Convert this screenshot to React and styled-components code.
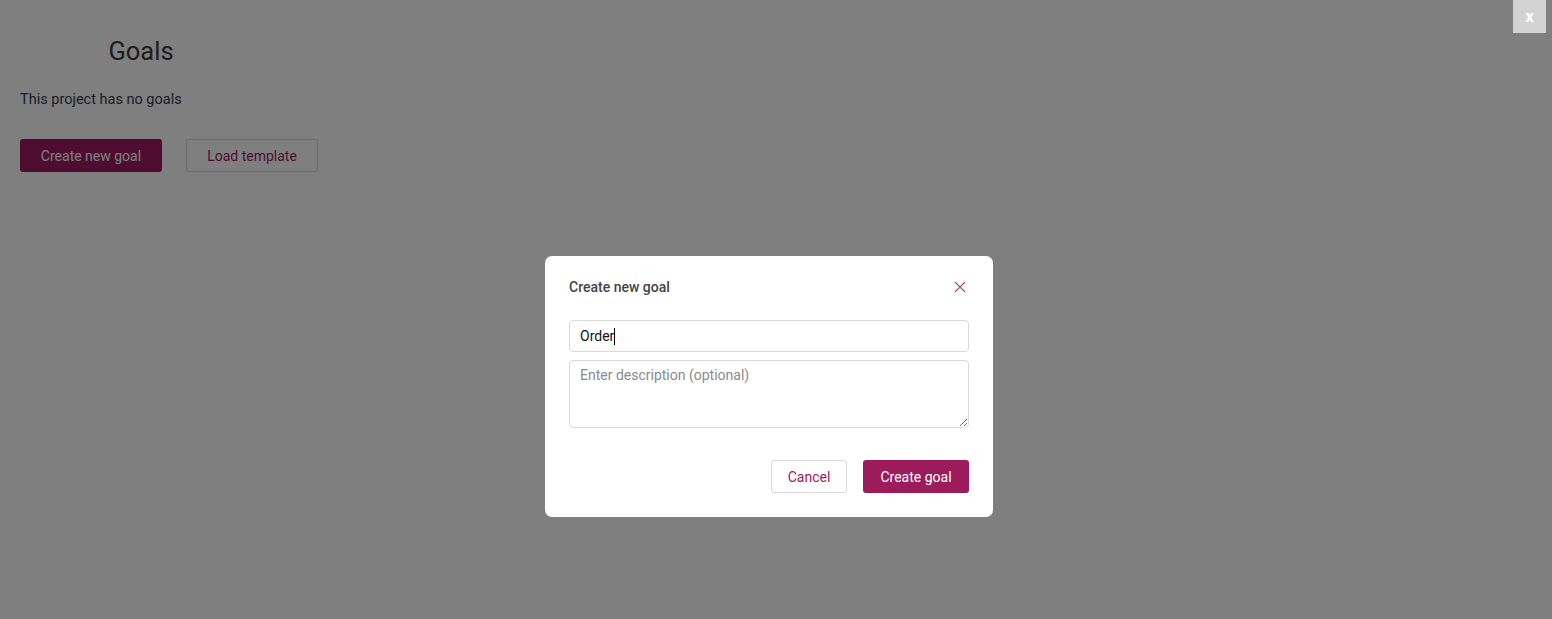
import React, { useState } from 'react'
import styled, { createGlobalStyle } from 'styled-components'

const GlobalStyle = createGlobalStyle`
  html, body {
    margin: 0;
    padding: 0;
    background: #fff;
    font-family: Roboto, "Liberation Sans", sans-serif;
  }
  * { box-sizing: border-box; }
`

const App = () => {
    const [title, setTitle] = useState('Order')
    const [desc, setDesc] = useState('')

    return (
        <>
            <GlobalStyle />
            <Page>
                <Header>
                    <Title>Goals</Title>
                </Header>
                <Empty>This project has no goals</Empty>
                <Actions>
                    <PrimaryButton>Create new goal</PrimaryButton>
                    <OutlineButton>Load template</OutlineButton>
                </Actions>
            </Page>

            <Overlay>
                <Modal>
                    <ModalHead>
                        <ModalTitle>Create new goal</ModalTitle>
                        <CloseIcon aria-label="close">
                            <svg width="12" height="12" viewBox="0 0 12 12">
                                <path d="M1 1 L11 11 M11 1 L1 11" stroke="#a5506e" strokeWidth="1.1" fill="none" />
                            </svg>
                        </CloseIcon>
                    </ModalHead>
                    <FieldWrap>
                        <Field value={title} onChange={(e) => setTitle(e.target.value)} />
                        <Caret />
                    </FieldWrap>
                    <Area placeholder="Enter description (optional)" value={desc} onChange={(e) => setDesc(e.target.value)} />
                    <Footer>
                        <CancelButton>Cancel</CancelButton>
                        <SubmitButton>Create goal</SubmitButton>
                    </Footer>
                </Modal>
            </Overlay>
            <ExitButton>x</ExitButton>
        </>
    )
}

export default App


const Page = styled.div`
width: 100%;
height: 619px;
padding: 20px;
`

const Header = styled.div`
width: 242px;
display: flex;
justify-content: center;
padding-top: 16px;
`

const Title = styled.h1`
margin: 0;
font-size: 25.5px;
font-weight: 400;
line-height: 30px;
color: #3a3a3a;
`

const Empty = styled.p`
margin: 24px 0 0;
font-size: 14.5px;
line-height: 20px;
color: #2f3a4a;
`

const Actions = styled.div`
display: flex;
gap: 24px;
margin-top: 29px;
`

const PrimaryButton = styled.button`
height: 33px;
width: 142px;
border: none;
border-radius: 3px;
background: #9d1a60;
color: #fff;
font-family: Roboto, sans-serif;
font-size: 14px;
`

const OutlineButton = styled.button`
height: 33px;
width: 132px;
border: 1px solid #d6d6d6;
border-radius: 3px;
background: #fff;
color: #9d1a60;
font-family: Roboto, sans-serif;
font-size: 14px;
`

const Overlay = styled.div`
position: fixed;
inset: 0;
background: rgba(0, 0, 0, 0.5);
display: flex;
align-items: flex-start;
justify-content: center;
padding: 256px 14px 0 0;
`

const Modal = styled.div`
width: 448px;
background: #fff;
border-radius: 7px;
padding: 20px 24px 24px;
display: flex;
flex-direction: column;
gap: 8px;
`

const ModalHead = styled.div`
display: flex;
align-items: center;
justify-content: space-between;
height: 22px;
margin-bottom: 14px;
`

const ModalTitle = styled.h3`
margin: 0;
font-size: 14px;
font-weight: 500;
color: #444;
`

const CloseIcon = styled.span`
display: flex;
margin-right: 3px;
`

const FieldWrap = styled.div`
position: relative;
`

const Field = styled.input`
height: 32px;
width: 100%;
border: 1px solid #d9d9d9;
border-radius: 4px;
padding: 0 10px;
font-family: Roboto, sans-serif;
font-size: 14px;
color: #111;
outline: none;
`

const Caret = styled.span`
position: absolute;
left: 45px;
top: 8px;
width: 1px;
height: 17px;
background: #000;
`

const Area = styled.textarea`
height: 68px;
width: 100%;
border: 1px solid #d9d9d9;
border-radius: 4px;
padding: 6px 10px;
font-family: Roboto, sans-serif;
font-size: 14px;
color: #111;
outline: none;
&::placeholder { color: #8a8a8a; }
`

const Footer = styled.div`
display: flex;
justify-content: flex-end;
gap: 16px;
margin-top: 24px;
`

const CancelButton = styled.button`
height: 33px;
width: 76px;
border: 1px solid #d9d9d9;
border-radius: 3px;
background: #fff;
color: #9d1a60;
font-family: Roboto, sans-serif;
font-size: 14px;
`

const SubmitButton = styled.button`
height: 33px;
width: 106px;
border: none;
border-radius: 3px;
background: #9b1b5b;
color: #fff;
font-family: Roboto, sans-serif;
font-size: 14px;
font-weight: 400;
`

const ExitButton = styled.button`
position: fixed;
top: 0;
right: 6px;
width: 33px;
height: 33px;
border: none;
background: #d3d3d3;
color: #fff;
font-family: Roboto, sans-serif;
font-size: 16px;
font-weight: 700;
`
